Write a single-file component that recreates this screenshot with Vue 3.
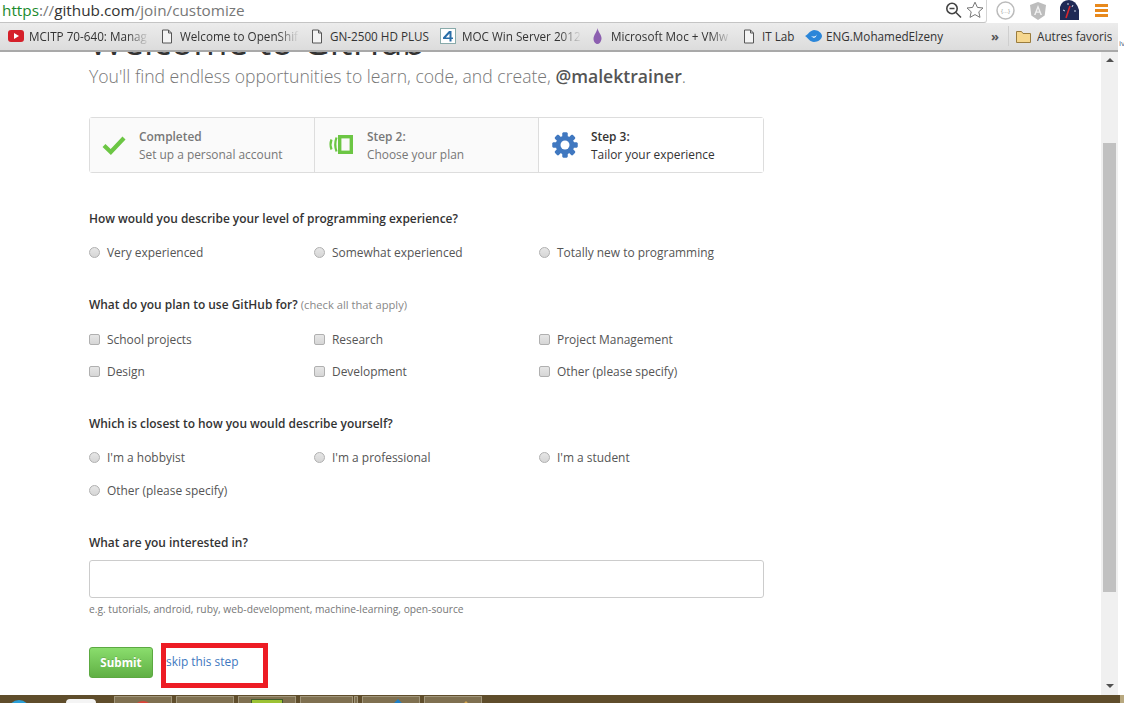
<script setup>
const bookmarks = [
  { label: 'MCITP 70-640: Manag', icon: 'yt', width: 153, fade: true },
  { label: 'Welcome to OpenShif', icon: 'doc', width: 150, fade: true },
  { label: 'GN-2500 HD PLUS', icon: 'doc', width: 129 },
  { label: 'MOC Win Server 2012', icon: 'four', width: 153, fade: true },
  { label: 'Microsoft Moc + VMw', icon: 'drop', width: 150, fade: true },
  { label: 'IT Lab', icon: 'doc', width: 62 },
  { label: 'ENG.MohamedElzeny', icon: 'bird', width: 186 }
]
const steps = [
  { title: 'Completed', sub: 'Set up a personal account', icon: 'check' },
  { title: 'Step 2:', sub: 'Choose your plan', icon: 'plan' },
  { title: 'Step 3:', sub: 'Tailor your experience', icon: 'gear', active: true }
]
const teeth = [0, 45, 90, 135, 180, 225, 270, 315]
const taskItems = [
  { w: 58, m: 0, glyph: 'red' },
  { w: 58, m: 4 },
  { w: 58, m: 4, glyph: 'green' },
  { w: 53, m: 4 },
  { w: 4, m: 1 },
  { w: 58, m: 4, glyph: 'blue' },
  { w: 58, m: 4, glyph: 'tan' }
]
</script>

<template>
  <div class="screen">
    <header class="urlbar">
      <div class="omnibox">
        <div class="url">
          <span class="https">https</span><span class="muted">://</span><span class="host">github.com</span><span class="muted">/join/customize</span>
        </div>
        <svg class="zoomglass" width="17" height="18" viewBox="0 0 17 18"><circle cx="7" cy="7.500" r="5.200" fill="none" stroke="#444" stroke-width="1.600"/><path d="M4.500 7.500h5M11 11.500l5 5" stroke="#444" stroke-width="1.600"/></svg>
        <svg class="star" width="18" height="18" viewBox="0 0 18 18"><path d="M9 1.200l2.400 5.200 5.600.6-4.200 3.800 1.200 5.600L9 13.600l-5 2.800 1.200-5.600L1 7l5.600-.6z" fill="#fff" stroke="#777" stroke-width="1"/></svg>
      </div>
      <div class="tools">
        <svg class="ext-json" width="19" height="19" viewBox="0 0 19 19"><circle cx="9.500" cy="9.500" r="8.500" fill="#fff" stroke="#bbb" stroke-width="1.500"/><text x="9.500" y="12" text-anchor="middle" class="ext-text">{...}</text></svg>
        <svg class="ext-ng" width="18" height="20" viewBox="0 0 18 20"><path d="M9 1L1 4l1.300 10.500L9 19l6.700-4.500L17 4z" fill="#bdbdbd"/><path d="M9 4L5 14h1.600l.8-2.200h3.200l.8 2.200H13zM8 10.400L9 7.600l1 2.800z" fill="#f1f1f1"/></svg>
        <svg class="ext-speed" width="19" height="20" viewBox="0 0 19 20"><path d="M0 20V7Q2 0 9 0t10 10v10z" fill="#1f2a55"/><path d="M6 18L10 6" stroke="#d9262c" stroke-width="1.600"/><path d="M3 10l2 1M8 3v2M13 5l-1 2M16 11l-2 0" stroke="#cfd6ea" stroke-width="1"/></svg>
        <div class="menu"><i></i><i></i><i></i></div>
      </div>
    </header>

    <div class="barrow">
      <nav class="bookmarks">
        <div v-for="b in bookmarks" :key="b.label" class="bm" :class="['bm-' + b.icon, { 'bm-clip': b.fade }]" :style="{ width: b.width + 'px' }">
          <svg v-if="b.icon === 'yt'" width="16" height="12" viewBox="0 0 16 12"><rect width="16" height="12" rx="3" fill="#d5202a"/><path d="M6 3l5 3-5 3z" fill="#fff"/></svg>
          <svg v-else-if="b.icon === 'doc'" width="12" height="15" viewBox="0 0 12 15"><path d="M1.500 1h6l3 3v10h-9z" fill="#f4f4f4" stroke="#555"/><path d="M7.500 1v3h3" fill="none" stroke="#555"/></svg>
          <svg v-else-if="b.icon === 'four'" width="16" height="16" viewBox="0 0 16 16"><rect x=".5" y=".5" width="15" height="15" fill="#fff" stroke="#8aa"/><path d="M9 3L3 9.500V11h6.500v2.500h2V11H13V9.500h-1.500V3zM9.500 5.500v4H5.800z" fill="#2a6ea8"/></svg>
          <svg v-else-if="b.icon === 'drop'" width="9" height="16" viewBox="0 0 9 16"><path d="M4.500 0C5 4 9 7 8.500 11c-.3 3-2.500 5-4 5s-4-2-4-5C.5 7 4 4 4.500 0z" fill="#8c5fb0"/></svg>
          <svg v-else width="17" height="12" viewBox="0 0 17 12"><path d="M0 6c3-1 4-5 9-6 4 0 8 3 8 6s-4 6-8 6c-4 0-6-4-9-6z" fill="#2b86d9"/><path d="M6 6c2 1 5 1 6-2-1 4-3 5-6 2z" fill="#fff"/></svg>
          <span class="bm-label" :class="{ fade: b.fade }">{{ b.label }}</span>
        </div>
        <span class="chev">»</span>
        <span class="bm-sep"></span>
        <svg class="folder" width="15" height="13" viewBox="0 0 15 13"><path d="M.5 1.500h5l1.500 2h7.500v9H.5z" fill="#f6d78e" stroke="#9a7c3e"/></svg>
        <span class="bm-label">Autres favoris</span>
      </nav>
      <span class="stray">iv</span>
    </div>

    <div class="viewport">
      <main class="page">
        <h1 class="welcome">Welcome to GitHub</h1>
        <p class="lead">You'll find endless opportunities to learn, code, and create, <strong>@malektrainer</strong>.</p>

        <ol class="steps">
          <li v-for="s in steps" :key="s.title" class="step" :class="{ active: s.active }">
            <svg v-if="s.icon === 'check'" class="step-icon" width="24" height="20" viewBox="0 0 24 20"><path d="M2 10.500l6.800 6.500L22 3" fill="none" stroke="#6cc644" stroke-width="4.200"/></svg>
            <svg v-else-if="s.icon === 'plan'" class="step-icon" width="26" height="20" viewBox="0 0 26 20"><rect x="12.700" y="1.700" width="11.600" height="15.600" fill="none" stroke="#6cc644" stroke-width="3.400"/><path d="M9.500 2.500Q7 9.500 9.500 16.500M4.500 4.500Q2.500 9.500 4.500 14.500" fill="none" stroke="#6cc644" stroke-width="2.200"/></svg>
            <svg v-else class="step-icon" width="26" height="26" viewBox="0 0 26 26">
              <rect v-for="t in teeth" :key="t" x="10.500" y="0.500" width="5" height="25" rx="1" fill="#4078c0" :transform="`rotate(${t} 13 13)`"/>
              <circle cx="13" cy="13" r="6.800" fill="none" stroke="#4078c0" stroke-width="5"/>
              <circle cx="13" cy="13" r="4.500" fill="#fff"/>
            </svg>
            <div class="step-text">
              <b>{{ s.title }}</b>
              <span>{{ s.sub }}</span>
            </div>
          </li>
        </ol>

        <section class="q q-first">
          <h2>How would you describe your level of programming experience?</h2>
          <div class="opts">
            <label><i class="radio"></i>Very experienced</label>
            <label><i class="radio"></i>Somewhat experienced</label>
            <label><i class="radio"></i>Totally new to programming</label>
          </div>
        </section>

        <section class="q q-second">
          <h2>What do you plan to use GitHub for? <small>(check all that apply)</small></h2>
          <div class="opts">
            <label><i class="box"></i>School projects</label>
            <label><i class="box"></i>Research</label>
            <label><i class="box"></i>Project Management</label>
            <label><i class="box"></i>Design</label>
            <label><i class="box"></i>Development</label>
            <label><i class="box"></i>Other (please specify)</label>
          </div>
        </section>

        <section class="q q-third">
          <h2>Which is closest to how you would describe yourself?</h2>
          <div class="opts">
            <label><i class="radio"></i>I'm a hobbyist</label>
            <label><i class="radio"></i>I'm a professional</label>
            <label><i class="radio"></i>I'm a student</label>
            <label><i class="radio"></i>Other (please specify)</label>
          </div>
        </section>

        <section class="q q-fourth">
          <h2>What are you interested in?</h2>
          <div class="field"></div>
          <p class="hint">e.g. tutorials, android, ruby, web-development, machine-learning, open-source</p>
        </section>

        <div class="actions">
          <button class="submit">Submit</button>
          <a class="skip">skip this step</a>
          <span class="annot"></span>
        </div>
      </main>

      <aside class="scrollbar">
        <span class="arrow up"></span>
        <span class="thumb"></span>
        <span class="arrow down"></span>
      </aside>
    </div>

    <footer class="taskbar">
      <span class="orb"></span>
      <span class="note"></span>
      <div v-for="(t, i) in taskItems" :key="i" class="task" :style="{ width: t.w + 'px', marginLeft: t.m + 'px' }">
        <span v-if="t.glyph" class="glyph" :class="t.glyph"></span>
      </div>
      <span class="desktop"></span>
    </footer>
  </div>
</template>

<style>
html, body { margin: 0; background: #fff; }
</style>

<style scoped>
.screen {
  width: 1124px;
  height: 703px;
  overflow: hidden;
  display: flex;
  flex-direction: column;
  background: #fff;
  font-family: "Open Sans", "Noto Sans", sans-serif;
  color: #333;
}
.urlbar {
  height: 23px;
  flex: none;
  display: flex;
  background: #fff;
}
.omnibox {
  width: 987px;
  height: 23px;
  flex: none;
  box-sizing: border-box;
  display: flex;
  align-items: flex-start;
  padding-left: 2px;
  border-bottom: 1px solid #c4c4c4;
  border-right: 1px solid #d4d4d4;
  border-bottom-right-radius: 3px;
}
.url { flex: 1; font-size: 15.300px; line-height: 20px; white-space: nowrap; }
.https { color: #1b8a2c; }
.host { color: #333; }
.muted { color: #777; }
.zoomglass { margin: 1px 4px 0 0; flex: none; }
.star { margin: 1px 2px 0 0; flex: none; }
.tools { display: flex; align-items: flex-start; padding-top: 1px; padding-left: 9px; }
.ext-json { margin-right: 14px; }
.ext-ng { margin-right: 13px; }
.ext-speed { margin: -1px 16px 0 0; }
.ext-text { font-size: 6px; fill: #999; font-family: "Liberation Sans", sans-serif; }
.menu { display: flex; flex-direction: column; gap: 2.500px; width: 13px; padding-top: 3px; }
.menu i { display: block; height: 2.500px; background: #e8891c; }

.barrow { display: flex; height: 29px; flex: none; }
.stray { flex: 1; font-size: 8px; line-height: 10px; padding: 15px 0 0 1px; color: #46627e; }
.bookmarks {
  height: 29px;
  flex: none;
  width: 1118px;
  display: flex;
  align-items: center;
  padding: 0 0 1px 8px;
  box-sizing: border-box;
  background: linear-gradient(#ececec, #dcdcdc);
  border-bottom: 2px solid #a9a9a9;
  font-size: 11.700px;
  color: #333;
}
.bm { display: flex; align-items: center; gap: 5px; flex: none; box-sizing: border-box; white-space: nowrap; }
.bm-clip { padding-right: 9px; }
.bm svg { flex: none; }
.bm-doc { gap: 7px; }
.bm-four { gap: 6px; }
.bm-drop { gap: 9px; }
.bm-bird { gap: 4px; }
.bm-label { white-space: nowrap; flex: 1; min-width: 0; overflow: hidden; }
.bm-label.fade { -webkit-mask-image: linear-gradient(90deg, #000 80%, transparent 98%); mask-image: linear-gradient(90deg, #000 80%, transparent 98%); }
.chev { width: 16px; font-size: 13px; font-weight: 700; color: #555; line-height: 1; }
.bm-sep { width: 1px; height: 20px; background: #cfcfcf; margin: 0 7px 0 1px; }
.folder { margin-right: 6px; flex: none; }
.bookmarks > .bm-label { flex: none; }

.viewport { flex: 1; min-height: 0; display: flex; overflow: hidden; }
.page { width: 1101px; flex: none; padding: 0 0 0 89px; box-sizing: border-box; position: relative; }
.welcome {
  margin: -33px 0 0;
  height: 44px;
  font-size: 37px;
  line-height: 44px;
  font-weight: 400;
  color: #333;
  white-space: nowrap;
}
.lead {
  margin: -1px 0 0;
  height: 28px;
  line-height: 28px;
  font-size: 17.600px;
  color: #777;
  white-space: nowrap;
  font-weight: 300;
}
.lead strong { font-weight: 600; color: #555; }

.steps {
  list-style: none;
  margin: 27px 0 0;
  padding: 0;
  width: 675px;
  height: 56px;
  box-sizing: border-box;
  display: grid;
  grid-template-columns: 224px 224px 1fr;
  border: 1px solid #ddd;
  border-radius: 3px;
}
.step {
  display: flex;
  align-items: center;
  background: #fafafa;
  border-left: 1px solid #ddd;
  padding-left: 12px;
  min-width: 0;
}
.step:first-child { border-left: 0; }
.step.active { background: #fff; }
.step-icon { flex: none; }
.step-text { display: flex; flex-direction: column; margin-left: 13px; font-size: 11.900px; line-height: 18px; color: #777; }
.step:nth-child(2) .step-text { margin-left: 14px; }
.step:nth-child(3) { padding-left: 13px; }
.step:nth-child(3) .step-text { margin-left: 13px; }
.step b { font-weight: 600; }
.step.active .step-text { color: #333; }

.q h2 {
  margin: 0;
  font-size: 11.950px;
  line-height: 18px;
  font-weight: 600;
  color: #333;
  white-space: nowrap;
}
.q small { font-size: 11.200px; font-weight: 400; color: #888; }
.q-first { margin-top: 37px; }
.q-second { margin-top: 35px; }
.q-third { margin-top: 35px; }
.q-fourth { margin-top: 35px; }
.opts {
  display: grid;
  grid-template-columns: 225px 225px 225px;
  width: 675px;
  row-gap: 14px;
  margin-top: 15px;
}
.q-second .opts { margin-top: 16px; }
.q-third .opts { row-gap: 15px; }
label {
  display: flex;
  align-items: center;
  height: 18px;
  font-size: 11.950px;
  color: #555;
  white-space: nowrap;
}
.radio, .box {
  display: block;
  width: 11px;
  height: 11px;
  box-sizing: border-box;
  margin-right: 7px;
  flex: none;
  border: 1px solid #b0b0b0;
  background: linear-gradient(#e6e6e6, #d6d6d6);
}
.radio { border-radius: 50%; }
.box { border-radius: 2px; }
.field {
  width: 675px;
  height: 38px;
  margin-top: 8px;
  box-sizing: border-box;
  border: 1px solid #ccc;
  border-radius: 3px;
  background: #fff;
}
.hint { margin: 5px 0 0; font-size: 10.250px; line-height: 12px; color: #777; white-space: nowrap; }

.actions { position: relative; display: flex; align-items: flex-start; margin-top: 32px; }
.submit {
  width: 64px;
  height: 31px;
  padding: 0;
  box-sizing: border-box;
  border: 1px solid #5ca941;
  border-radius: 3px;
  background: linear-gradient(#8add6d, #60b044);
  color: #fff;
  font: 700 11.600px "Open Sans", sans-serif;
  text-shadow: 0 -1px 0 rgba(0, 0, 0, .15);
}
.skip { margin-left: 13px; margin-top: 5px; font-size: 11.900px; line-height: 18px; color: #4078c0; white-space: nowrap; }
.annot {
  position: absolute;
  left: 72px;
  top: -4px;
  width: 107px;
  height: 45px;
  box-sizing: border-box;
  border: 5px solid #ed1c24;
}

.scrollbar {
  width: 17px;
  flex: none;
  background: #f0f0f0;
  display: flex;
  flex-direction: column;
  align-items: center;
}
.arrow { width: 0; height: 0; border-left: 4px solid transparent; border-right: 4px solid transparent; flex: none; }
.arrow.up { border-bottom: 4px solid #505050; margin-top: 6px; }
.arrow.down { border-top: 4px solid #505050; margin-top: auto; margin-bottom: 7px; }
.thumb { width: 13px; margin-top: 81px; height: 449px; background: #c1c1c1; flex: none; }

.taskbar {
  height: 8px;
  flex: none;
  background: #5f4d2b;
  display: flex;
  align-items: flex-start;
  position: relative;
  overflow: hidden;
  padding-left: 114px;
  box-sizing: border-box;
}
.orb { position: absolute; left: 8px; top: 5px; width: 22px; height: 22px; border-radius: 50%; background: #2a9fd8; }
.note { position: absolute; left: 66px; top: 4px; width: 30px; height: 20px; border-radius: 4px; background: #f4f4f4; }
.desktop { position: absolute; right: 0; top: 0; width: 4px; height: 8px; background: #b8a87f; }
.task {
  flex: none;
  height: 16px;
  margin-top: 1px;
  box-sizing: border-box;
  border: 1px solid #a2977c;
  background: #7f7050;
  position: relative;
}
.glyph { position: absolute; display: block; }
.glyph.red { left: 18px; top: 4px; width: 20px; height: 20px; border-radius: 50%; background: #d8443a; }
.glyph.green { left: 12px; top: 2px; width: 32px; height: 20px; background: #9cc234; border: 1px solid #3f5a2e; box-sizing: border-box; }
.glyph.blue { left: 28px; top: 5px; width: 14px; height: 14px; background: #1f7fc4; transform: rotate(45deg); }
.glyph.tan { left: 34px; top: 7px; width: 14px; height: 14px; background: #d9a64c; transform: rotate(45deg); }
</style>
